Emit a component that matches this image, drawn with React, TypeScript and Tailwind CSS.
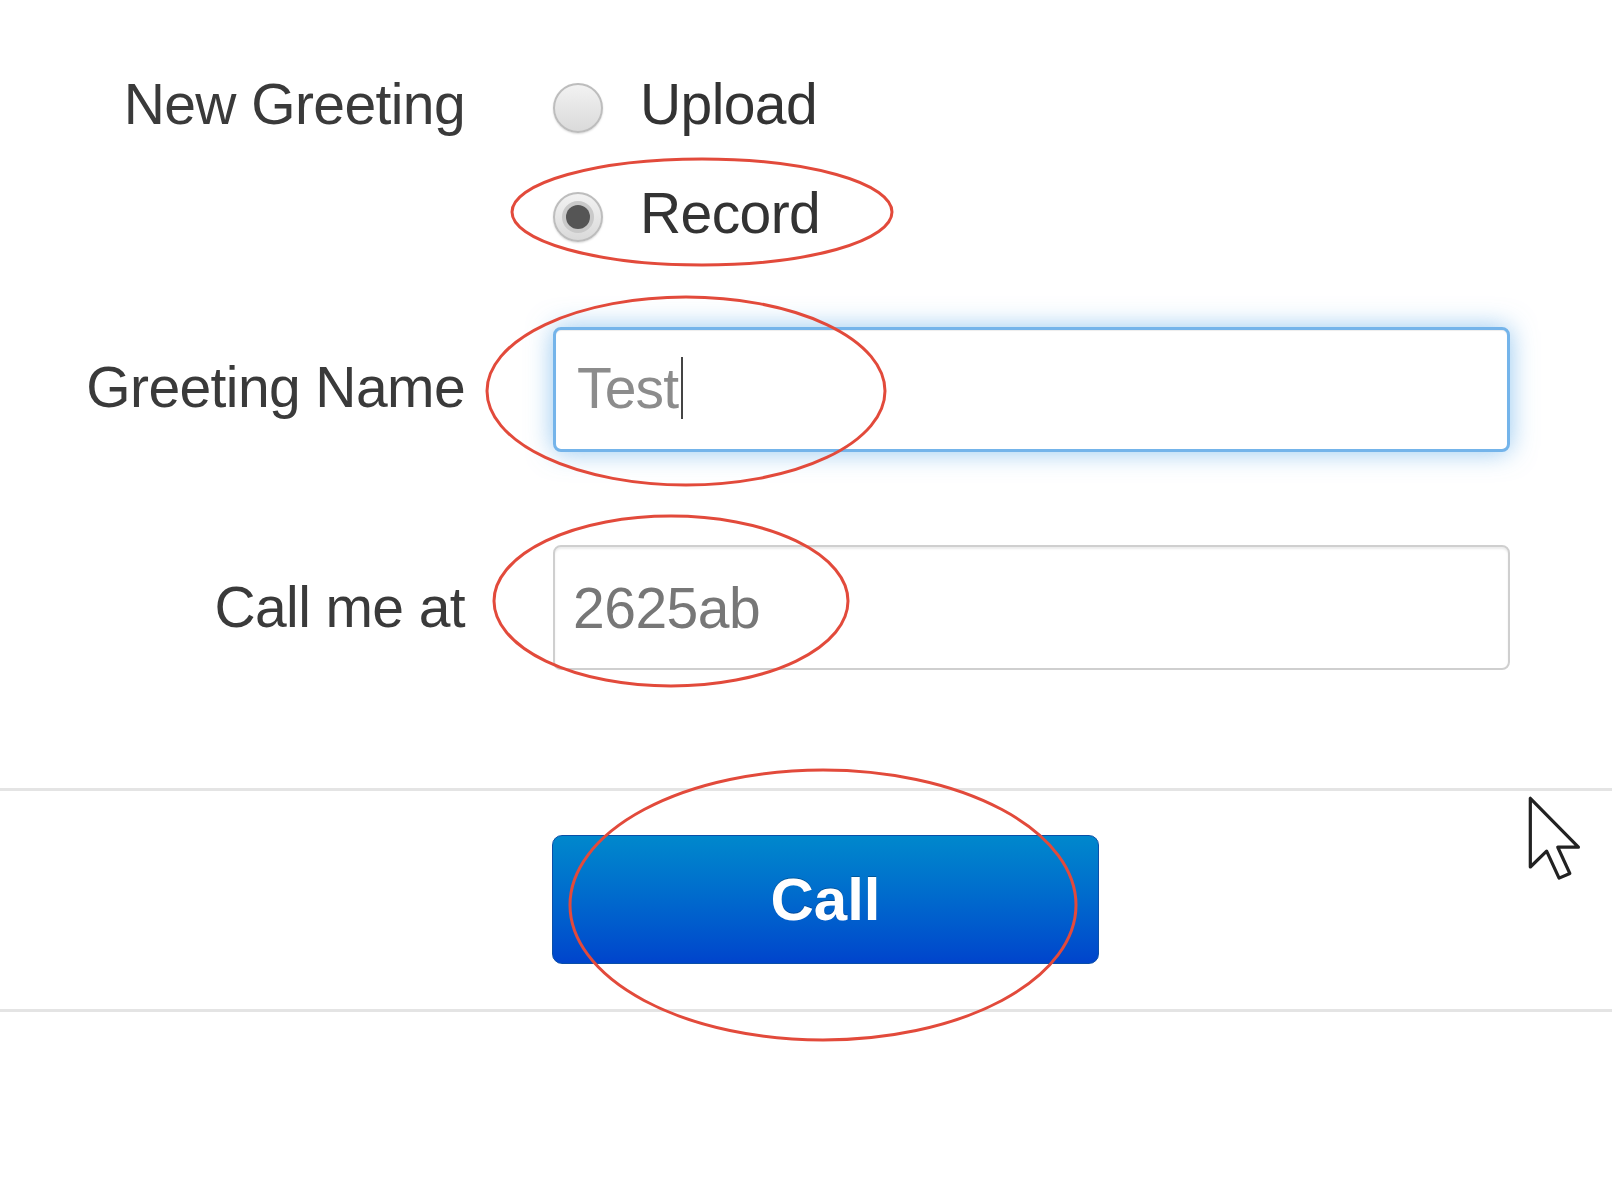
import { ReactNode } from "react";

function Radio({ checked, label }: { checked?: boolean; label: string }) {
  return (
    <div className="flex h-[64px] items-center gap-[37px]">
      <span className="mt-[8px] flex h-[50px] w-[50px] shrink-0 items-center justify-center rounded-full border-2 border-[#bdbdbd] bg-gradient-to-b from-[#f2f2f2] to-[#dadada] shadow-[0_1px_2px_rgba(0,0,0,0.15)]">
        {checked && (
          <span className="h-[24px] w-[24px] rounded-full bg-[#555] shadow-[0_0_0_4px_#c9c9c9]" />
        )}
      </span>
      <span className="text-[57px] leading-[64px] tracking-[-0.6px] text-[#333]">
        {label}
      </span>
    </div>
  );
}

function Label({ children, className = "" }: { children: ReactNode; className?: string }) {
  return (
    <div
      className={`w-[465px] shrink-0 text-right text-[57px] leading-[64px] tracking-[-0.6px] text-[#3a3a3a] ${className}`}
    >
      {children}
    </div>
  );
}

export default function App() {
  return (
    <div className="relative min-h-[1181px] overflow-hidden bg-white font-['Liberation_Sans',Arial,sans-serif]">
      <div className="pt-[72px]">
        {/* New Greeting */}
        <div className="flex items-start">
          <Label>New Greeting</Label>
          <div className="ml-[88px] flex flex-col gap-[45px]">
            <Radio label="Upload" />
            <Radio checked label="Record" />
          </div>
        </div>

        {/* Greeting Name (focused) */}
        <div className="mt-[82px] flex items-start">
          <Label className="mt-[28px]">Greeting Name</Label>
          <div className="ml-[88px] flex h-[125px] w-[957px] items-center rounded-[8px] border-[3px] border-[#74b4ea] bg-white pl-[21px] pb-[4px] shadow-[0_0_26px_rgba(102,175,233,0.7),inset_0_1px_1px_rgba(0,0,0,0.075)]">
            <span className="text-[57px] leading-[64px] tracking-[-0.8px] text-[#8c8c8c]">Test</span>
            <span className="ml-[3px] h-[62px] w-[2px] bg-[#444]" />
          </div>
        </div>

        {/* Call me at */}
        <div className="mt-[93px] flex items-start">
          <Label className="mt-[30px]">Call me at</Label>
          <input
            readOnly
            value="2625ab"
            className="ml-[88px] h-[125px] w-[957px] rounded-[8px] border-2 border-[#cfcfcf] bg-white px-[18px] text-[57px] tracking-[-0.5px] text-[#777] shadow-[inset_0_2px_2px_rgba(0,0,0,0.08)] outline-none"
          />
        </div>

        {/* Footer */}
        <div className="mt-[118px] border-y-[3px] border-[#e4e4e4] pt-[44px] pb-[45px]">
          <button className="ml-[552px] flex h-[129px] w-[547px] items-center justify-center rounded-[10px] border border-[#0a4fa8] bg-gradient-to-b from-[#0088cc] to-[#0044cc] text-[60px] font-bold text-white [text-shadow:0_-1px_0_rgba(0,0,0,0.25)]">
            Call
          </button>
        </div>
      </div>

      {/* annotation ellipses */}
      <svg
        className="pointer-events-none absolute left-0 top-0"
        width="1612"
        height="1181"
        viewBox="0 0 1612 1181"
        fill="none"
        stroke="#e24a3b"
        strokeWidth="3"
      >
        <ellipse cx="702" cy="212" rx="190" ry="53" />
        <ellipse cx="686" cy="391" rx="199" ry="94" />
        <ellipse cx="671" cy="601" rx="177" ry="85" />
        <ellipse cx="823" cy="905" rx="253" ry="135" />
      </svg>

      {/* mouse pointer */}
      <svg
        className="pointer-events-none absolute left-[1526px] top-[794px]"
        width="58"
        height="88"
        viewBox="0 0 13.5 20.5"
      >
        <path
          d="M1 1 L1 17 L4.8 13.3 L7.7 19.6 L10.2 18.5 L7.4 12.4 L12.2 12.4 Z"
          fill="white"
          stroke="#222"
          strokeWidth="0.75"
          strokeLinejoin="round"
        />
      </svg>
    </div>
  );
}
